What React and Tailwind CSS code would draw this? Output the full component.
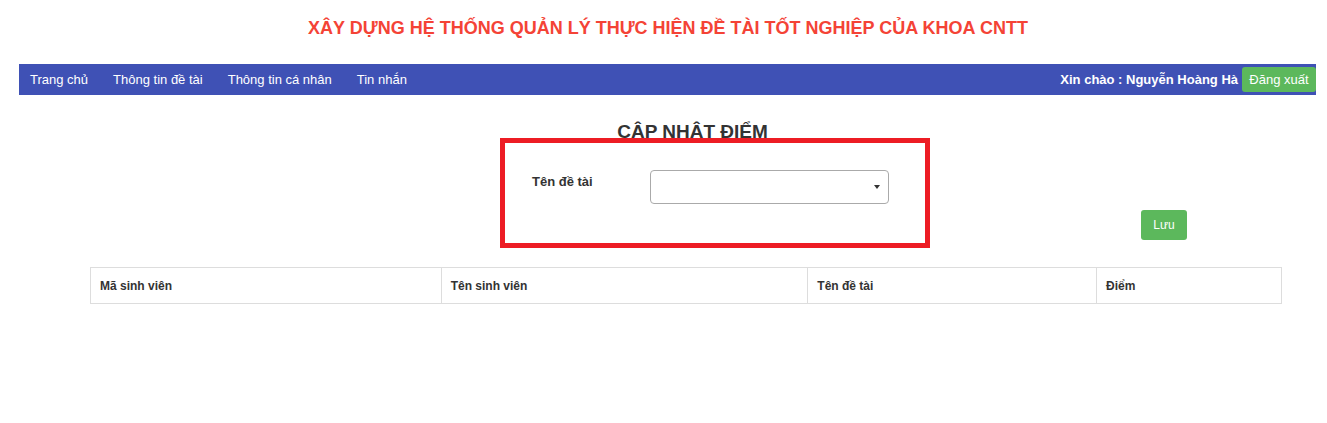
import React from 'react';

const navLinks = ['Trang chủ', 'Thông tin đề tài', 'Thông tin cá nhân', 'Tin nhắn'];

const columns = [
  { label: 'Mã sinh viên', w: 'w-[351px]' },
  { label: 'Tên sinh viên', w: 'w-[367px]' },
  { label: 'Tên đề tài', w: 'w-[289px]' },
  { label: 'Điểm', w: 'w-[185px]' },
];

const App = () => {
  return (
    <div className="relative min-h-[423px] bg-white text-[#333] font-['Liberation_Sans',Arial,sans-serif]">
      {/* page title */}
      <div className="pt-[18px] pb-[26px] pl-[9px] text-center">
        <h1 className="text-[18px] leading-[20px] font-bold text-[#f44336]">
          XÂY DỰNG HỆ THỐNG QUẢN LÝ THỰC HIỆN ĐỀ TÀI TỐT NGHIỆP CỦA KHOA CNTT
        </h1>
      </div>

      {/* navbar */}
      <nav className="ml-[19px] mr-[11px] h-[31px] bg-[#3f51b5] flex items-center justify-between text-white text-[13px]">
        <ul className="flex items-center pl-[11px] gap-[25px]">
          {navLinks.map((l) => (
            <li key={l} className="cursor-pointer">{l}</li>
          ))}
        </ul>
        <div className="flex items-center">
          <span className="font-bold mr-[4px]">Xin chào : Nguyễn Hoàng Hà</span>
          <button className="h-[25px] w-[74px] rounded-[3px] bg-[#5cb85c] text-white text-[13px]">Đăng xuất</button>
        </div>
      </nav>

      {/* content */}
      <div className="pt-[27px]">
        <h2 className="pl-[58px] text-center text-[19px] leading-[20px] font-bold text-[#333]">CẬP NHẬT ĐIỂM</h2>

        <div className="mt-[28px] flex items-start">
          <label className="ml-[532px] w-[118px] pt-[2px] text-[13px] leading-[20px] font-bold">Tên đề tài</label>
          <div className="w-[239px] h-[34px] border border-[#aaa] rounded-[4px] bg-white flex items-center justify-end pr-[8px]">
            <svg width="6" height="4" viewBox="0 0 6 4">
              <path d="M0 0 L6 0 L3 4 Z" fill="#333" />
            </svg>
          </div>
        </div>

        <div className="mt-[6px] flex">
          <button className="ml-[1141px] w-[46px] h-[30px] rounded-[3px] bg-[#5cb85c] text-white text-[12px]">Lưu</button>
        </div>

        <table className="mt-[27px] ml-[90px] w-[1192px] border-collapse text-[12px]">
          <thead>
            <tr>
              {columns.map((c) => (
                <th key={c.label} className={`${c.w} h-[36px] border border-[#ddd] px-[9px] text-left font-bold`}>
                  {c.label}
                </th>
              ))}
            </tr>
          </thead>
        </table>
      </div>

      {/* red highlight annotation */}
      <div className="absolute left-[500px] top-[138px] w-[430px] h-[110px] border-[5px] border-[#ed1c24] pointer-events-none" />
    </div>
  );
};

export default App;
